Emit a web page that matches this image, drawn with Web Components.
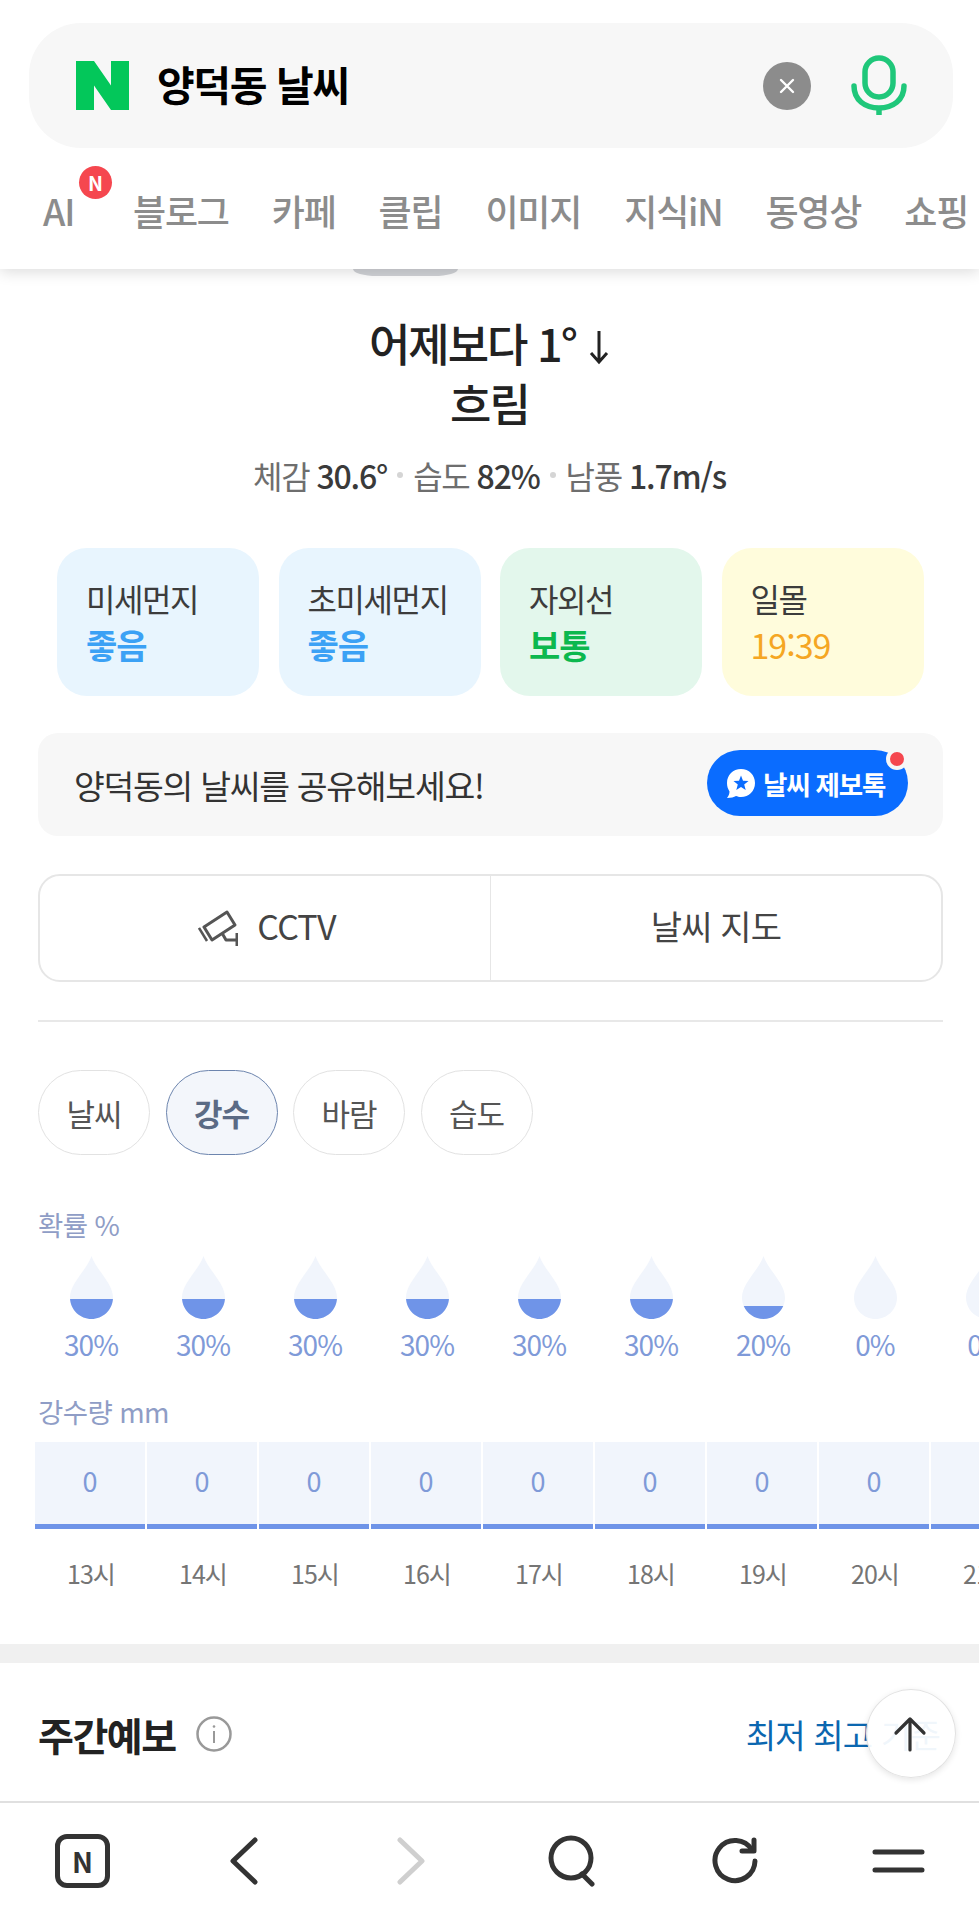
<!DOCTYPE html>
<html lang="ko">
<head>
<meta charset="utf-8">
<title>양덕동 날씨</title>
<style>
  html, body { margin: 0; padding: 0; background: #fff; }
  body { width: 979px; height: 1920px; overflow: hidden; display: flex; flex-direction: column;
    font-family: "Noto Sans CJK KR", "Noto Sans", sans-serif; color: #222; }
  main { flex: 1; min-height: 0; overflow: hidden; position: relative; }
</style>
</head>
<body>
<search-header query="양덕동 날씨"></search-header>
<main>
  <weather-summary></weather-summary>
  <share-bar place="양덕동"></share-bar>
  <link-row></link-row>
  <pill-tabs></pill-tabs>
  <rain-chart></rain-chart>
  <week-title></week-title>
  <up-button></up-button>
</main>
<bottom-nav></bottom-nav>

<script>
class SearchHeader extends HTMLElement {
  constructor() {
    super()
    this.attachShadow({ mode: 'open' })
    let tabs = ['블로그', '카페', '클립', '이미지', '지식iN', '동영상', '쇼핑']
    this.shadowRoot.innerHTML = `
      <style>
      :host { display: block; height: 269px; background: #fff; position: relative; z-index: 2; box-shadow: 0 3px 14px rgba(0,0,0,.14); overflow: hidden; }
      .box { margin: 23px 26px 0 29px; height: 125px; border-radius: 52px; background: #f7f7f7; display: flex; align-items: center; padding: 0 46px 0 47px; }
      .logo { width: 53px; height: 49px; flex: none; }
      .q { flex: 1; margin: 0 0 5px 28px; font-size: 41px; font-weight: 700; letter-spacing: -1.4px; color: #000; }
      .clear { width: 48px; height: 48px; border-radius: 50%; background: #8c8c8c; display: flex; align-items: center; justify-content: center; }
      .mic { width: 56px; height: 62px; margin-left: 40px; }
      nav { display: flex; gap: 43px; padding: 40px 0 0 43px; font-size: 36px; font-weight: 500; letter-spacing: -1.2px; color: #8c8c8c; line-height: 44px; white-space: nowrap; }
      .ai { position: relative; width: 47px; }
      .badge { position: absolute; left: 36px; top: -22px; width: 33px; height: 33px; border-radius: 50%; background: #f5474f; color: #fff; font-size: 20px; font-weight: 700; line-height: 33px; text-align: center; letter-spacing: 0; }
      </style>
      <div class="box">
        <svg class="logo" viewBox="0 0 53 49"><polygon fill="#03c75a" points="0,0 18,0 35,24.5 35,0 53,0 53,49 35,49 18,24.5 18,49 0,49"/></svg>
        <div class="q">${this.getAttribute('query')}</div>
        <div class="clear"><svg width="18" height="18" viewBox="0 0 18 18"><path d="M3 3L15 15M15 3L3 15" stroke="#fff" stroke-width="2.4" stroke-linecap="round"/></svg></div>
        <svg class="mic" viewBox="0 0 56 62" fill="none" stroke="#1fc77a" stroke-width="5.5" stroke-linecap="round">
          <rect x="14" y="3" width="28" height="39" rx="14"/>
          <path d="M3 31C3 45 14 53 28 53C42 53 53 45 53 31"/>
          <path d="M28 53V60" stroke-linecap="butt"/>
        </svg>
      </div>
      <nav>
        <span class="ai">AI<span class="badge">N</span></span>
        ${tabs.map(t => `<span>${t}</span>`).join('')}
      </nav>
    `
  }
}

class MetricCard extends HTMLElement {
  constructor() {
    super()
    this.attachShadow({ mode: 'open' })
    this.shadowRoot.innerHTML = `
      <style>
      :host { display: block; height: 148px; border-radius: 30px; padding: 28px 0 0 29px; box-sizing: border-box; background: var(--bg); }
      .l { font-size: 32px; line-height: 44px; letter-spacing: -1.4px; color: #3c3c3c; }
      .v { font-size: 34px; line-height: 50px; letter-spacing: -1px; font-weight: 700; color: var(--fg); }
      :host([plain]) .v { font-weight: 400; }
      </style>
      <div class="l"><slot name="label"></slot></div>
      <div class="v"><slot name="value"></slot></div>
    `
  }
}

class WeatherSummary extends HTMLElement {
  constructor() {
    super()
    this.attachShadow({ mode: 'open' })
    this.shadowRoot.innerHTML = `
      <style>
      :host { display: block; }
      .peek { width: 105px; height: 7px; margin-left: 353px; background: #d0d2d6; border-radius: 0 0 24px 24px / 0 0 7px 7px; }
      h2 { margin: 37px 0 0; font-size: 45px; line-height: 60px; font-weight: 500; letter-spacing: -2px; text-align: center; color: #222; }
      .arrow { display: inline-block; width: 22px; height: 36px; margin-left: 12px; vertical-align: -3px; }
      .sub { margin-top: 22px; height: 40px; display: flex; justify-content: center; align-items: center; font-size: 32px; line-height: 40px; letter-spacing: -1.2px; color: #6e6e6e; white-space: nowrap; }
      .sub b { font-weight: 500; color: #3a3a3a; margin-left: 7px; }
      .dot { width: 6px; height: 6px; border-radius: 50%; background: #d5d5d5; margin: 0 10px; }
      .cards { display: grid; grid-template-columns: repeat(4, 202px); gap: 19.5px; margin: 53px 0 0 57px; }
      </style>
      <div class="peek"></div>
      <h2>어제보다 1°<svg class="arrow" viewBox="0 0 22 36" fill="none" stroke="#222" stroke-width="3"><path d="M11 2V33M3 24L11 33L19 24"/></svg><br>흐림</h2>
      <div class="sub">체감<b>30.6°</b><i class="dot"></i>습도<b>82%</b><i class="dot"></i>남풍<b>1.7m/s</b></div>
      <div class="cards">
        <metric-card style="--bg:#e8f5fe;--fg:#3ba1f5"><span slot="label">미세먼지</span><span slot="value">좋음</span></metric-card>
        <metric-card style="--bg:#e8f5fe;--fg:#3ba1f5"><span slot="label">초미세먼지</span><span slot="value">좋음</span></metric-card>
        <metric-card style="--bg:#e3f7ec;--fg:#0cb84e"><span slot="label">자외선</span><span slot="value">보통</span></metric-card>
        <metric-card plain style="--bg:#fffcdc;--fg:#f5a623"><span slot="label">일몰</span><span slot="value">19:39</span></metric-card>
      </div>
    `
  }
}

class ShareBar extends HTMLElement {
  constructor() {
    super()
    this.attachShadow({ mode: 'open' })
    this.shadowRoot.innerHTML = `
      <style>
      :host { display: flex; align-items: center; justify-content: space-between; height: 103px; margin: 37px 36px 0 38px; padding: 0 35px 0 36px; border-radius: 20px; background: #f7f7f7; }
      .t { font-size: 33.5px; letter-spacing: -1.3px; color: #333; margin-bottom: 1px; }
      .btn { position: relative; width: 201px; height: 66px; margin-bottom: 3px; border-radius: 33px; background: #0a6cff; color: #fff; display: flex; align-items: center; padding-left: 19px; box-sizing: border-box; font-size: 26.5px; font-weight: 700; letter-spacing: -1.2px; white-space: nowrap; }
      .btn svg { width: 30px; height: 31px; margin-right: 7px; flex: none; }
      .dot { position: absolute; right: 0px; top: -2px; width: 14px; height: 14px; border: 4px solid #f7f7f7; border-radius: 50%; background: #f5474f; }
      </style>
      <span class="t">${this.getAttribute('place')}의 날씨를 공유해보세요!</span>
      <div class="btn">
        <svg viewBox="0 0 30 31"><path fill="#fff" d="M15 1C7 1 1 7 1 15C1 18.5 2 21 3.5 23.5C3.5 26 2.5 28 1 30C5 30 8 29 10 28C11.5 28.5 13 29 15 29C23 29 29 23 29 15C29 7 23 1 15 1Z"/><polygon fill="#0a6cff" points="15,7.5 17,12.8 22.5,13 18.2,16.5 19.7,22 15,18.9 10.3,22 11.8,16.5 7.5,13 13,12.8"/></svg>
        날씨 제보톡
        <i class="dot"></i>
      </div>
    `
  }
}

class LinkRow extends HTMLElement {
  constructor() {
    super()
    this.attachShadow({ mode: 'open' })
    this.shadowRoot.innerHTML = `
      <style>
      :host { display: flex; height: 108px; margin: 38px 36px 0 38px; box-sizing: border-box; border: 2px solid #e6e6e6; border-radius: 22px; font-size: 34px; letter-spacing: -.8px; color: #444; }
      a { flex: 1; display: flex; align-items: center; justify-content: center; padding-bottom: 6px; }
      a + a { border-left: 1.5px solid #e6e6e6; }
      svg { width: 40px; height: 36px; margin: 6px 19px 0 4px; }
      </style>
      <a><svg viewBox="0 0 40 36" fill="none" stroke="#555" stroke-width="3" stroke-linejoin="round"><path d="M6 17L29 2L37 15L14 30Z"/><path d="M1 18L9 31" stroke-width="2.5"/><path d="M24 23L28 30H39M39 23V36"/></svg>CCTV</a>
      <a>날씨 지도</a>
    `
  }
}

class PillTabs extends HTMLElement {
  constructor() {
    super()
    this.attachShadow({ mode: 'open' })
    let tabs = ['날씨', '강수', '바람', '습도']
    this.shadowRoot.innerHTML = `
      <style>
      :host { display: block; margin: 38px 36px 0 38px; padding-top: 48px; border-top: 2px solid #e8e8e8; }
      .row { display: flex; gap: 15.5px; }
      span { width: 112px; height: 85px; box-sizing: border-box; border: 1.5px solid #e2e2e2; border-radius: 43px; display: flex; align-items: center; justify-content: center; font-size: 31px; letter-spacing: -1px; color: #555; }
      .on { background: #f3f6fb; border-color: #6d85ae; color: #5b6b85; font-weight: 700; }
      </style>
      <div class="row">${tabs.map((t, i) => `<span class="${i == 1 ? 'on' : ''}">${t}</span>`).join('')}</div>
    `
  }
}

class RainChart extends HTMLElement {
  constructor() {
    super()
    this.attachShadow({ mode: 'open' })
    let percents = [30, 30, 30, 30, 30, 30, 20, 0, 0]
    let hours = [13, 14, 15, 16, 17, 18, 19, 20, 21]
    let drop = 'M21.5 0C26 14 43 27 43 41.5C43 53.4 33.4 63 21.5 63C9.6 63 0 53.4 0 41.5C0 27 17 14 21.5 0Z'
    this.shadowRoot.innerHTML = `
      <style>
      :host { display: block; margin-top: 54px; color: #8f9dc6; width: 1100px; }
      .cap { margin-left: 38px; font-size: 27.5px; line-height: 30px; letter-spacing: -.6px; }
      .row { display: grid; grid-template-columns: repeat(9, 112px); margin-left: 35px; text-align: center; }
      .drops { margin-top: 17px; color: #7f9ad8; font-size: 28px; letter-spacing: -1px; }
      .drops svg { display: block; width: 43px; height: 63px; margin: 0 auto 7px; }
      .drops span { display: block; line-height: 36px; }
      .cap.mm { margin-top: 34px; }
      .bars { margin-top: 16px; }
      .bars div { width: 110px; height: 87px; box-sizing: border-box; background: #f1f5fc; border-bottom: 5px solid #6f94e8; color: #7f9ad8; font-size: 27px; line-height: 78px; }
      .hours { margin-top: 24px; font-size: 25px; line-height: 40px; letter-spacing: -1px; color: #757575; }
      </style>
      <div class="cap">확률 %</div>
      <div class="row drops">
        ${percents.map((p, i) => `<div>
          <svg viewBox="0 0 43 63">
            <clipPath id="c${i}"><rect x="0" y="${p == 30 ? 43 : p == 20 ? 50 : 63}" width="43" height="20"/></clipPath>
            <path fill="#f1f5fc" d="${drop}"/>
            <path fill="#6f94e8" clip-path="url(#c${i})" d="${drop}"/>
          </svg>
          <span>${p}%</span></div>`).join('')}
      </div>
      <div class="cap mm">강수량 mm</div>
      <div class="row bars">${hours.map(() => `<div>0</div>`).join('')}</div>
      <div class="row hours">${hours.map(h => `<span>${h}시</span>`).join('')}</div>
    `
  }
}

class WeekTitle extends HTMLElement {
  constructor() {
    super()
    this.attachShadow({ mode: 'open' })
    this.shadowRoot.innerHTML = `
      <style>
      :host { display: block; margin-top: 51px; border-top: 19px solid #f0f0f0; }
      .row { display: flex; align-items: center; padding: 46px 39px 0 38px; height: 50px; }
      h3 { margin: 0; font-size: 39px; font-weight: 700; letter-spacing: -1.5px; color: #222; }
      svg { width: 36px; height: 36px; margin-left: 20px; }
      .std { margin-left: auto; font-size: 33px; letter-spacing: -.8px; color: #0b67b0; }
      </style>
      <div class="row">
        <h3>주간예보</h3>
        <svg viewBox="0 0 36 36" fill="none" stroke="#999"><circle cx="18" cy="18" r="16.5" stroke-width="2.5"/><path d="M18 15V27" stroke-width="2"/><circle cx="18" cy="10.5" r="1.3" fill="#999" stroke="none"/></svg>
        <span class="std">최저 최고 기준</span>
      </div>
    `
  }
}

class UpButton extends HTMLElement {
  constructor() {
    super()
    this.attachShadow({ mode: 'open' })
    this.shadowRoot.innerHTML = `
      <style>
      :host { position: absolute; left: 866px; top: 1420px; width: 90px; height: 89px; box-sizing: border-box; border-radius: 50%; background: rgba(255,255,255,.94); border: 1.5px solid #e2e2e2; box-shadow: 0 2px 6px rgba(0,0,0,.1); display: flex; align-items: center; justify-content: center; }
      svg { width: 34px; height: 36px; margin-right: 3px; }
      </style>
      <svg viewBox="0 0 34 36" fill="none" stroke="#333" stroke-width="3.2" stroke-linecap="round" stroke-linejoin="round"><path d="M17 34V3M3 17L17 3L31 17"/></svg>
    `
  }
}

class BottomNav extends HTMLElement {
  constructor() {
    super()
    this.attachShadow({ mode: 'open' })
    this.shadowRoot.innerHTML = `
      <style>
      :host { display: block; height: 119px; box-sizing: border-box; border-top: 2px solid #e0e0e0; background: #fff; position: relative; z-index: 2; }
      .row { display: flex; height: 115px; align-items: center; padding-left: 55px; }
      .home { width: 55px; height: 54px; box-sizing: border-box; border: 5px solid #333; border-radius: 12px; display: flex; align-items: center; justify-content: center; font-size: 28px; font-weight: 700; color: #333; line-height: 1; }
      svg { display: block; flex: none; fill: none; stroke: #333; stroke-width: 5; stroke-linecap: round; stroke-linejoin: round; }
      </style>
      <div class="row">
        <div class="home">N</div>
        <svg style="margin-left:119px" width="30" height="48" viewBox="0 0 30 48"><path d="M26 3L4 24L26 45"/></svg>
        <svg style="margin-left:137px;stroke:#cfcfcf" width="30" height="48" viewBox="0 0 30 48"><path d="M4 3L26 24L4 45"/></svg>
        <svg style="margin-left:122px" width="50" height="52" viewBox="0 0 50 52"><circle cx="23" cy="23" r="20"/><path d="M34 39L44 49"/></svg>
        <svg style="margin-left:113px" width="48" height="48" viewBox="0 0 48 48"><path d="M41 13A20 20 0 1 0 44 24"/><path d="M43 3V14H31"/></svg>
        <svg style="margin-left:113px" width="53" height="26" viewBox="0 0 53 26" stroke-width="6"><path d="M3 4H50M3 22H50"/></svg>
      </div>
    `
  }
}

customElements.define('metric-card', MetricCard)
customElements.define('search-header', SearchHeader)
customElements.define('weather-summary', WeatherSummary)
customElements.define('share-bar', ShareBar)
customElements.define('link-row', LinkRow)
customElements.define('pill-tabs', PillTabs)
customElements.define('rain-chart', RainChart)
customElements.define('week-title', WeekTitle)
customElements.define('up-button', UpButton)
customElements.define('bottom-nav', BottomNav)
</script>
</body>
</html>
